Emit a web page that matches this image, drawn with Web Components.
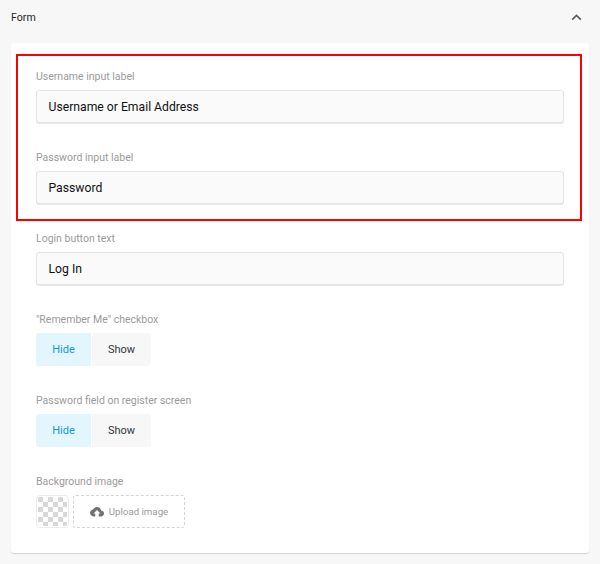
<!DOCTYPE html>
<html>
<head>
<meta charset="utf-8">
<title>Form</title>
<style>
html, body { margin: 0; padding: 0; background: #f7f7f7; }
body { font-family: Roboto, "Liberation Sans", sans-serif; overflow: hidden; }
</style>
</head>
<body>
<settings-panel title="Form">
  <text-field label="Username input label" value="Username or Email Address"></text-field>
  <text-field label="Password input label" value="Password"></text-field>
  <text-field label="Login button text" value="Log In"></text-field>
  <toggle-field label="&quot;Remember Me&quot; checkbox"></toggle-field>
  <toggle-field label="Password field on register screen"></toggle-field>
  <image-field label="Background image"></image-field>
</settings-panel>

<script>
const templatePanel = document.createElement("template");
templatePanel.innerHTML = `
<style>
:host { display: block; height: 564px; box-sizing: border-box; padding: 0 11px; }
#head { display: flex; justify-content: space-between; align-items: center; height: 35px; margin-bottom: 8px; }
#title { font-size: 10.6px; color: #23282d; }
#head svg { display: block; margin-right: 7px; }
#card { position: relative; background: #fff; border-radius: 3px; box-shadow: 0 1px 1px rgba(0,0,0,.14); padding: 27px 25px 23px; height: 510px; box-sizing: border-box; display: flex; flex-direction: column; }
#mark { position: absolute; left: 5px; top: 11px; width: 566px; height: 167px; box-sizing: border-box; border: 2px solid #ff0000; pointer-events: none; }
</style>
<div id="head">
  <span id="title"></span>
  <svg width="11" height="7" viewBox="0 0 11 7"><path d="M1.200 5.600 5.500 1.500l4.300 4.100" fill="none" stroke="#555d66" stroke-width="1.700"/></svg>
</div>
<div id="card">
  <slot></slot>
  <div id="mark"></div>
</div>`;

class SettingsPanel extends HTMLElement {
    constructor() {
        super();
        this.attachShadow({mode: 'open'});
        this.shadowRoot.appendChild(templatePanel.content.cloneNode(true));
        this.shadowRoot.getElementById("title").textContent = this.getAttribute("title");
    }
}

const templateText = document.createElement("template");
templateText.innerHTML = `
<style>
:host { display: block; height: 81px; }
label { display: block; font-size: 10.5px; line-height: 14px; color: #9b9b9b; margin: 0 0 6px; }
#box { height: 33px; box-sizing: border-box; border: 1px solid #e4e4e4; border-radius: 3px; background: #fafafa; padding: 0 12px 0 11.5px; font-size: 12.2px; line-height: 33px; color: #111; box-shadow: 0 1px 0 #e8e8e8; }
</style>
<label></label>
<div id="box"></div>`;

class TextField extends HTMLElement {
    constructor() {
        super();
        this.attachShadow({mode: 'open'});
        this.shadowRoot.appendChild(templateText.content.cloneNode(true));
        this.shadowRoot.querySelector("label").textContent = this.getAttribute("label");
        this.shadowRoot.getElementById("box").textContent = this.getAttribute("value");
    }
}

const templateToggle = document.createElement("template");
templateToggle.innerHTML = `
<style>
:host { display: block; height: 81px; }
label { display: block; font-size: 10.5px; line-height: 14px; color: #9b9b9b; margin: 0 0 6px; }
#btns { display: flex; gap: 1px; }
.btn { width: 54px; height: 33px; line-height: 34px; text-align: center; font-size: 11px; background: #f7f7f7; color: #32373c; }
.btn:first-child { width: 55px; border-radius: 3px 0 0 3px; background: #e3f5fd; color: #0e9cd8; }
.btn:last-child { width: 59px; border-radius: 0 3px 3px 0; }
</style>
<label></label>
<div id="btns"><div class="btn">Hide</div><div class="btn">Show</div></div>`;

class ToggleField extends HTMLElement {
    constructor() {
        super();
        this.attachShadow({mode: 'open'});
        this.shadowRoot.appendChild(templateToggle.content.cloneNode(true));
        this.shadowRoot.querySelector("label").textContent = this.getAttribute("label");
    }
}

const templateImage = document.createElement("template");
templateImage.innerHTML = `
<style>
:host { display: block; }
label { display: block; font-size: 10.5px; line-height: 14px; color: #9b9b9b; margin: 0 0 6px; }
#row { display: flex; gap: 4px; }
#thumb { width: 33px; height: 33px; box-sizing: border-box; border: 1px solid #ececec; border-radius: 4px; padding: 1px;
  background-color: #fff;
  background-image: conic-gradient(#fff 25%, #d8d8d8 0 50%, #fff 0 75%, #d8d8d8 0);
  background-size: 10px 10px; background-origin: content-box; background-clip: content-box; }
#upload { width: 112px; height: 33px; box-sizing: border-box; border: 1px dashed #d5d5d5; border-radius: 3px; display: flex; align-items: center; justify-content: center; gap: 5px; font-size: 9.7px; color: #9b9b9b; }
svg { display: block; }
</style>
<label></label>
<div id="row">
  <div id="thumb"></div>
  <div id="upload">
    <svg width="14" height="10" viewBox="0 0 24 17"><path fill="#6c7278" d="M19.350 6.500C18.670 2.800 15.640 0 12 0 9.110 0 6.600 1.640 5.350 4.040 2.340 4.360 0 6.910 0 10c0 3.310 2.690 6 6 6h3v-5H6l6-6 6 6h-3v5h4c2.760 0 5-2.240 5-5 0-2.640-2.050-4.780-4.650-4.500z"/></svg>
    <span>Upload image</span>
  </div>
</div>`;

class ImageField extends HTMLElement {
    constructor() {
        super();
        this.attachShadow({mode: 'open'});
        this.shadowRoot.appendChild(templateImage.content.cloneNode(true));
        this.shadowRoot.querySelector("label").textContent = this.getAttribute("label");
    }
}

window.customElements.define('settings-panel', SettingsPanel);
window.customElements.define('text-field', TextField);
window.customElements.define('toggle-field', ToggleField);
window.customElements.define('image-field', ImageField);
</script>
</body>
</html>
